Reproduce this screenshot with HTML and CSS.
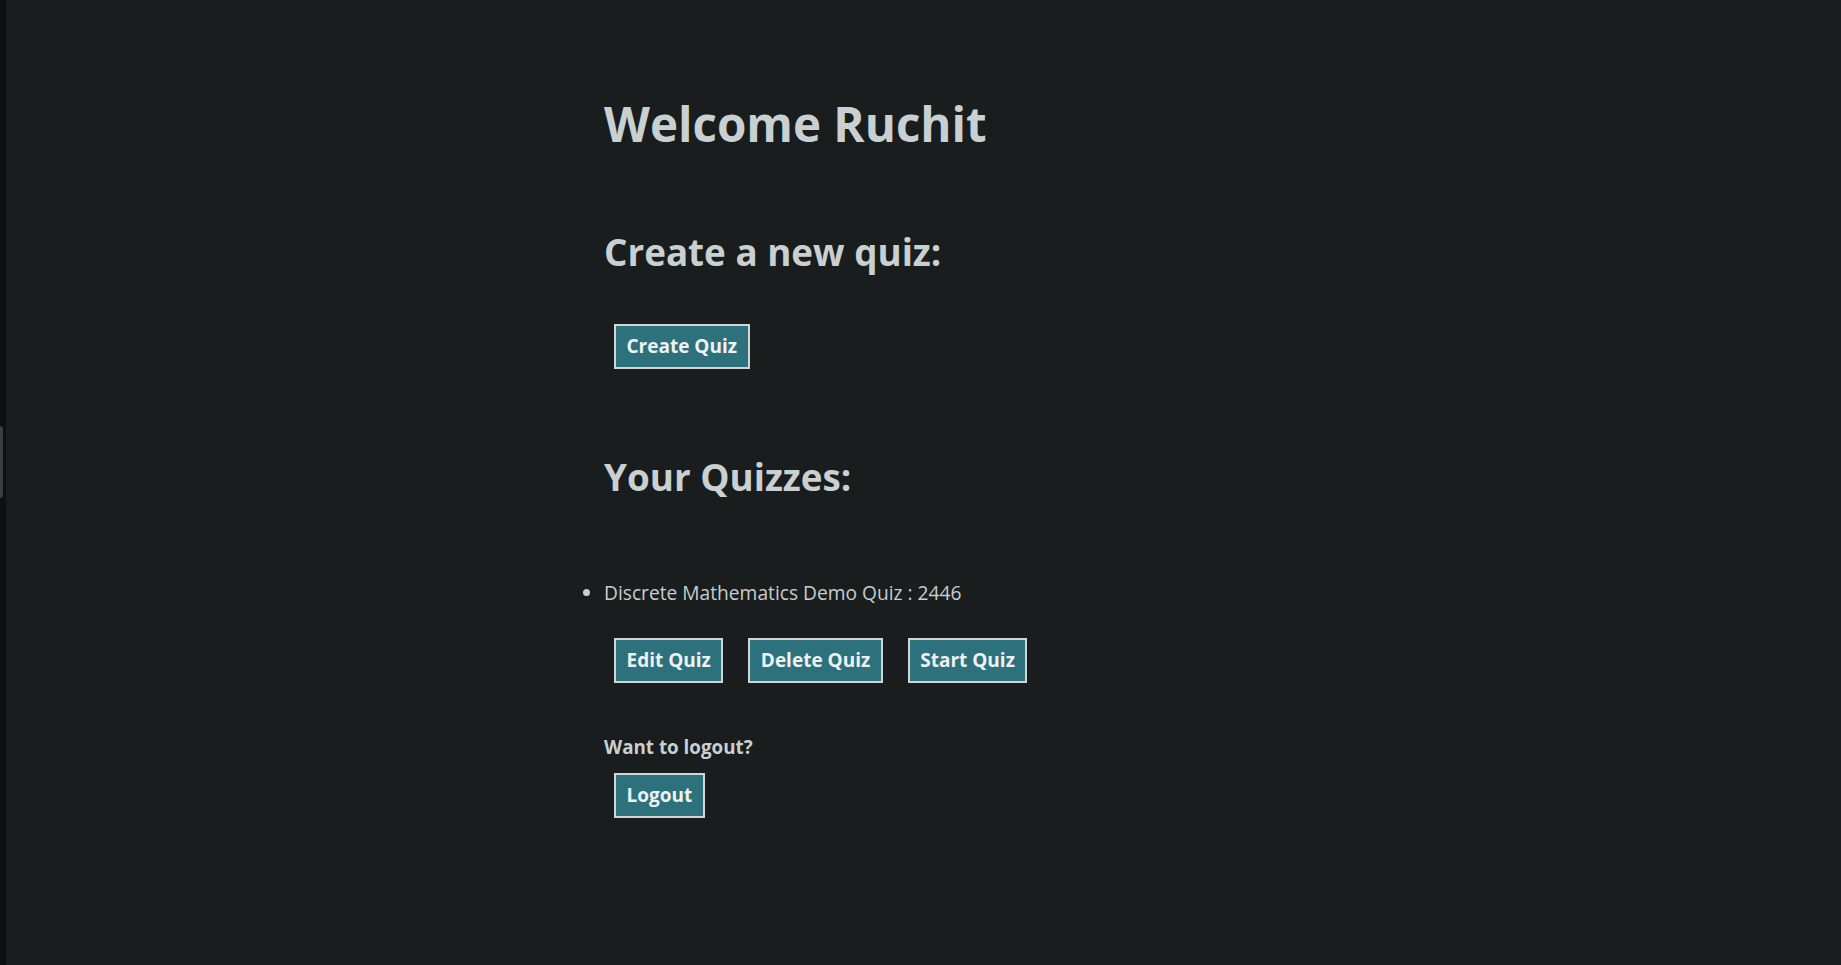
FILE: index.html
```html
<!DOCTYPE html>
<html lang="en">
<head>
<meta charset="utf-8">
<title>Quiz Dashboard</title>
<link rel="stylesheet" href="styles.css">
</head>
<body>
<div class="edge"><span class="edge-tab"></span></div>
<main class="main">
  <div class="content">
    <h1 class="title">Welcome Ruchit</h1>
    <h2 class="section-title section-create">Create a new quiz:</h2>
    <div class="actions actions-create">
      <button class="btn" type="button">Create Quiz</button>
    </div>
    <h2 class="section-title section-list">Your Quizzes:</h2>
    <ul class="quiz-list">
      <li class="quiz-item">Discrete Mathematics Demo Quiz : 2446</li>
    </ul>
    <div class="actions actions-quiz">
      <button class="btn" type="button">Edit Quiz</button>
      <button class="btn" type="button">Delete Quiz</button>
      <button class="btn" type="button">Start Quiz</button>
    </div>
    <p class="logout-label">Want to logout?</p>
    <div class="actions actions-logout">
      <button class="btn" type="button">Logout</button>
    </div>
  </div>
</main>
</body>
</html>
```
FILE: styles.css
```css
html, body {
  margin: 0;
  padding: 0;
  height: 100%;
}
body {
  display: flex;
  background: #1a1d1e;
  color: #c9d0d2;
  font-family: "Open Sans", "Noto Sans", sans-serif;
}
.edge {
  position: relative;
  width: 6px;
  flex: 0 0 6px;
  background: #0e0f0f;
}
.edge-tab {
  position: absolute;
  left: 0;
  top: 426px;
  width: 3px;
  height: 72px;
  background: #3b3c3c;
  border-radius: 0 3px 3px 0;
}
.main {
  flex: 1;
}
.content {
  width: 639px;
  margin: 0 auto;
  padding-top: 100px;
}
.title {
  margin: 0;
  height: 48px;
  font-size: 47.5px;
  line-height: 48px;
  font-weight: 700;
  color: #c9d0d2;
}
.section-title {
  margin: 0;
  height: 37px;
  font-size: 36.8px;
  line-height: 37px;
  font-weight: 700;
  color: #c9d0d2;
}
.section-create {
  margin-top: 86px;
}
.actions {
  display: flex;
  gap: 25px;
  padding: 10px;
}
.actions-create {
  margin-top: 43px;
}
.section-list {
  margin-top: 80px;
}
.quiz-list {
  margin: 87px 0 0 0;
  padding: 0;
  list-style: disc outside;
}
.quiz-item {
  height: 19px;
  font-size: 19.2px;
  line-height: 19px;
  color: #c6cdcf;
}
.actions-quiz {
  margin-top: 26px;
}
.logout-label {
  margin: 45px 0 0 0;
  height: 19px;
  font-size: 18.8px;
  line-height: 19px;
  font-weight: 700;
  color: #c9d0d2;
}
.actions-logout {
  margin-top: 6px;
}
.btn {
  box-sizing: border-box;
  height: 45px;
  padding: 0 10.5px;
  border: 2px solid #d2d5d5;
  background: #2d717d;
  color: #eef2f3;
  font-family: "Open Sans", "Noto Sans", sans-serif;
  font-size: 19px;
  font-weight: 700;
  line-height: 1;
  cursor: pointer;
}
```
